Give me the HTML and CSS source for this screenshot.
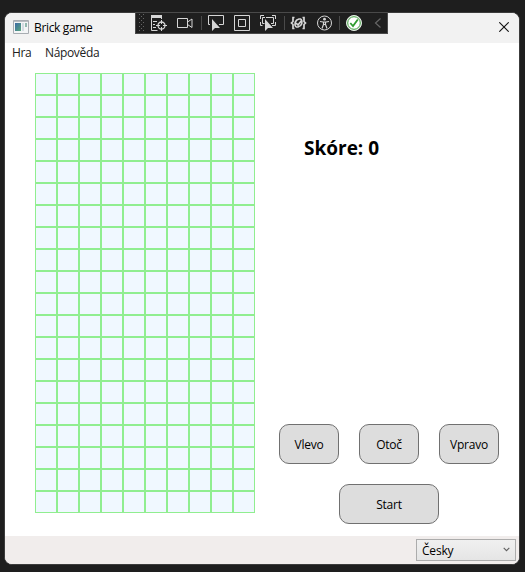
FILE: index.html
```
<!DOCTYPE html>
<html lang="cs">
<head>
<meta charset="utf-8">
<title>Brick game</title>
<link rel="stylesheet" href="styles.css">
</head>
<body>
<div class="window">
  <header class="titlebar">
    <svg class="app-icon" width="16" height="14" viewBox="0 0 16 14"><defs><linearGradient id="g" x2="1" y2="1"><stop stop-color="#3c6aa5"/><stop offset="1" stop-color="#58a77d"/></linearGradient></defs><path fill="#f3f5f6" stroke="#a8adb2" d="M.5.5h15v13H.5z"/><path fill="#b9bec3" d="M1 1h14v1H1z"/><path fill="url(#g)" d="M2 3h6v8H2z"/><path fill="#d3dce2" d="M9 3h2v8H9z"/><path fill="#93b9b0" d="M12 3h2v4h-2z"/></svg>
    <span class="title">Brick game</span>
    <svg class="close" width="10" height="10" viewBox="0 0 10 10"><path d="M.3.3l9.4 9.4M9.7.3L.3 9.7" stroke="#111" stroke-width="1.1"/></svg>
  </header>
  <nav class="menu"><span class="hra">Hra</span><span class="help">Nápověda</span></nav>
  <main class="content">
    <div class="board"></div>
    <section class="side">
      <h1 class="score">Skóre: 0</h1>
      <div class="controls"><button>Vlevo</button><button>Otoč</button><button>Vpravo</button></div>
      <button class="start">Start</button>
    </section>
  </main>
  <footer class="status">
    <div class="combo"><span>Česky</span><svg width="7" height="5" viewBox="0 0 7 5"><path d="M.7.8l2.8 2.8L6.3.8" fill="none" stroke="#606060" stroke-width="1.1"/></svg></div>
  </footer>
</div>
<div class="debugbar">
  <svg width="253" height="22" viewBox="135 12 253 22" fill="none" stroke="#d6d6d6">
    <defs><pattern id="grip" x="139" y="14" width="4" height="4" patternUnits="userSpaceOnUse"><path fill="#666" stroke="none" d="M0 0h1v1H0zM2 2h1v1H2z"/></pattern></defs>
    <path fill="url(#grip)" stroke="none" d="M139 14h6v18h-6z"/>
    <path fill="#d6d6d6" stroke="none" d="M151 15h11v3h-11z"/>
    <path d="M151.500 17v13.500h6M161.500 17v2M153 21.500h4M153 24.500h2M153 27.500h3"/>
    <circle cx="161.500" cy="25.500" r="3.500" stroke-width="1.300"/>
    <path d="M161.500 20v4M161.500 27v4M156 25.500h4M163 25.500h4"/>
    <path d="M177.500 18.500h10v9h-10zM187.500 22l4.500-3v8.500l-4.500-3"/>
    <path stroke="#4a4a4a" d="M201.500 16v14M284.500 16v14M339.500 16v14"/>
    <path d="M210 24.500h-1.500v-9h15v9H219"/>
    <path fill="#d6d6d6" stroke="none" d="M212 19v12l3-3h5z"/>
    <path d="M234.500 15.500h15v15h-15zM238.500 19.500h7v7h-7z"/>
    <path d="M264 15.500h-3.500V19M272 15.500h3.500V19M260.500 22v3.500h2M275.500 22v3.500H272M265 17.500h-2.500v6h2M266 17.500h7.500v6H271"/>
    <path fill="#d6d6d6" stroke="none" d="M265 19v12l3-3h5z"/>
    <g stroke-width="1.700"><path d="M294.500 17.500h-1.500v4l-1.500 1.500 1.500 1.500v4h1.500M302.500 17.500h1.500v4l1.500 1.500-1.500 1.500v4h-1.500"/><path d="M296 27c-2-3-1-7 3-8h2M301 19c2 3 1 7-3 8h-2M296 23l2 2 4-5"/></g>
    <circle cx="324.500" cy="23" r="7"/><circle cx="324.500" cy="19.200" r="1.400" fill="#d6d6d6" stroke="none"/>
    <path stroke-width="1.200" d="M320 21.500l3 .5h3l3-.5M323.500 22v2.500l-1.500 4M325.500 22v2.500l1.500 4M323 24.500h3"/>
    <circle cx="354" cy="23" r="7.500" fill="#fff" stroke="#e5efe5"/><circle cx="354" cy="23" r="6.300" stroke="#3b9b3b"/>
    <path stroke="#2f9b2f" stroke-width="1.800" d="M350.300 23l2.700 3 4.800-6.500"/>
    <path stroke="#666" stroke-width="1.200" d="M380.500 18.500l-5 4.500 5 4.500"/>
  </svg>
</div>
</body>
</html>
```
FILE: styles.css
```
* { box-sizing: border-box; }
body {
  margin: 0;
  width: 525px;
  height: 572px;
  padding: 12px 5px 7px 4px;
  overflow: hidden;
  background: #1e1e1e;
  color: #000;
  font: 12px "Open Sans", "Noto Sans", sans-serif;
  letter-spacing: -.35px;
}
.window {
  width: 516px;
  height: 553px;
  display: flex;
  flex-direction: column;
  overflow: hidden;
  border: 1px solid #3c3c3c;
  border-radius: 8px;
  background: #fff;
}
.titlebar {
  height: 30px;
  flex: none;
  display: flex;
  align-items: center;
  padding: 0 10px 0 8px;
  background: #f2f2f2;
}
.app-icon { margin-right: 5px; margin-top: -2px; }
.title { margin-top: -2px; }
.close { margin-left: auto; margin-top: -2px; }
.menu {
  height: 20px;
  flex: none;
  display: flex;
  gap: 14px;
  padding-left: 7px;
  line-height: 20px;
  color: #212121;
}
.hra { width: 19px; }
.help { letter-spacing: -.35px; }
.content {
  flex: 1;
  display: flex;
  padding: 10px 20px 0 30px;
}
.board {
  width: 220px;
  height: 440px;
  background:
    linear-gradient(90deg, #90ee90 1px, transparent 1px 21px, #90ee90 21px) 0 0 / 22px 22px,
    linear-gradient(#90ee90 1px, transparent 1px 21px, #90ee90 21px) 0 0 / 22px 22px,
    #f0f8ff;
}
.side {
  width: 220px;
  margin-left: 24px;
  display: flex;
  flex-direction: column;
}
.score {
  margin: 60px 0 0 25px;
  height: 30px;
  font-size: 19px;
  line-height: 30px;
  font-weight: 700;
  letter-spacing: 0;
  white-space: nowrap;
}
.controls {
  display: flex;
  gap: 20px;
  margin-top: 261px;
}
button {
  width: 60px;
  height: 40px;
  padding: 0;
  border: 1px solid #707070;
  border-radius: 10px;
  background: #ddd;
  color: #000;
  font: inherit;
  letter-spacing: -.25px;
}
.start {
  width: 100px;
  align-self: center;
  margin: 20px 0 0;
}
.status {
  height: 28px;
  flex: none;
  display: flex;
  align-items: center;
  justify-content: flex-end;
  padding-right: 3px;
  background: #f1edec;
}
.combo {
  width: 100px;
  height: 22px;
  display: flex;
  align-items: center;
  justify-content: space-between;
  padding: 0 5px;
  border: 1px solid #acacac;
  background: linear-gradient(#f0f0f0, #e5e5e5);
}
.combo span { letter-spacing: -.2px; padding-top: 1px; }
.combo svg { margin-top: -2px; }
.debugbar {
  position: absolute;
  left: 135px;
  top: 12px;
  width: 253px;
  height: 22px;
  background: #1f1f1f;
  box-shadow: inset 0 0 0 1px #4a4a4a;
}
.debugbar svg { display: block; }
```
